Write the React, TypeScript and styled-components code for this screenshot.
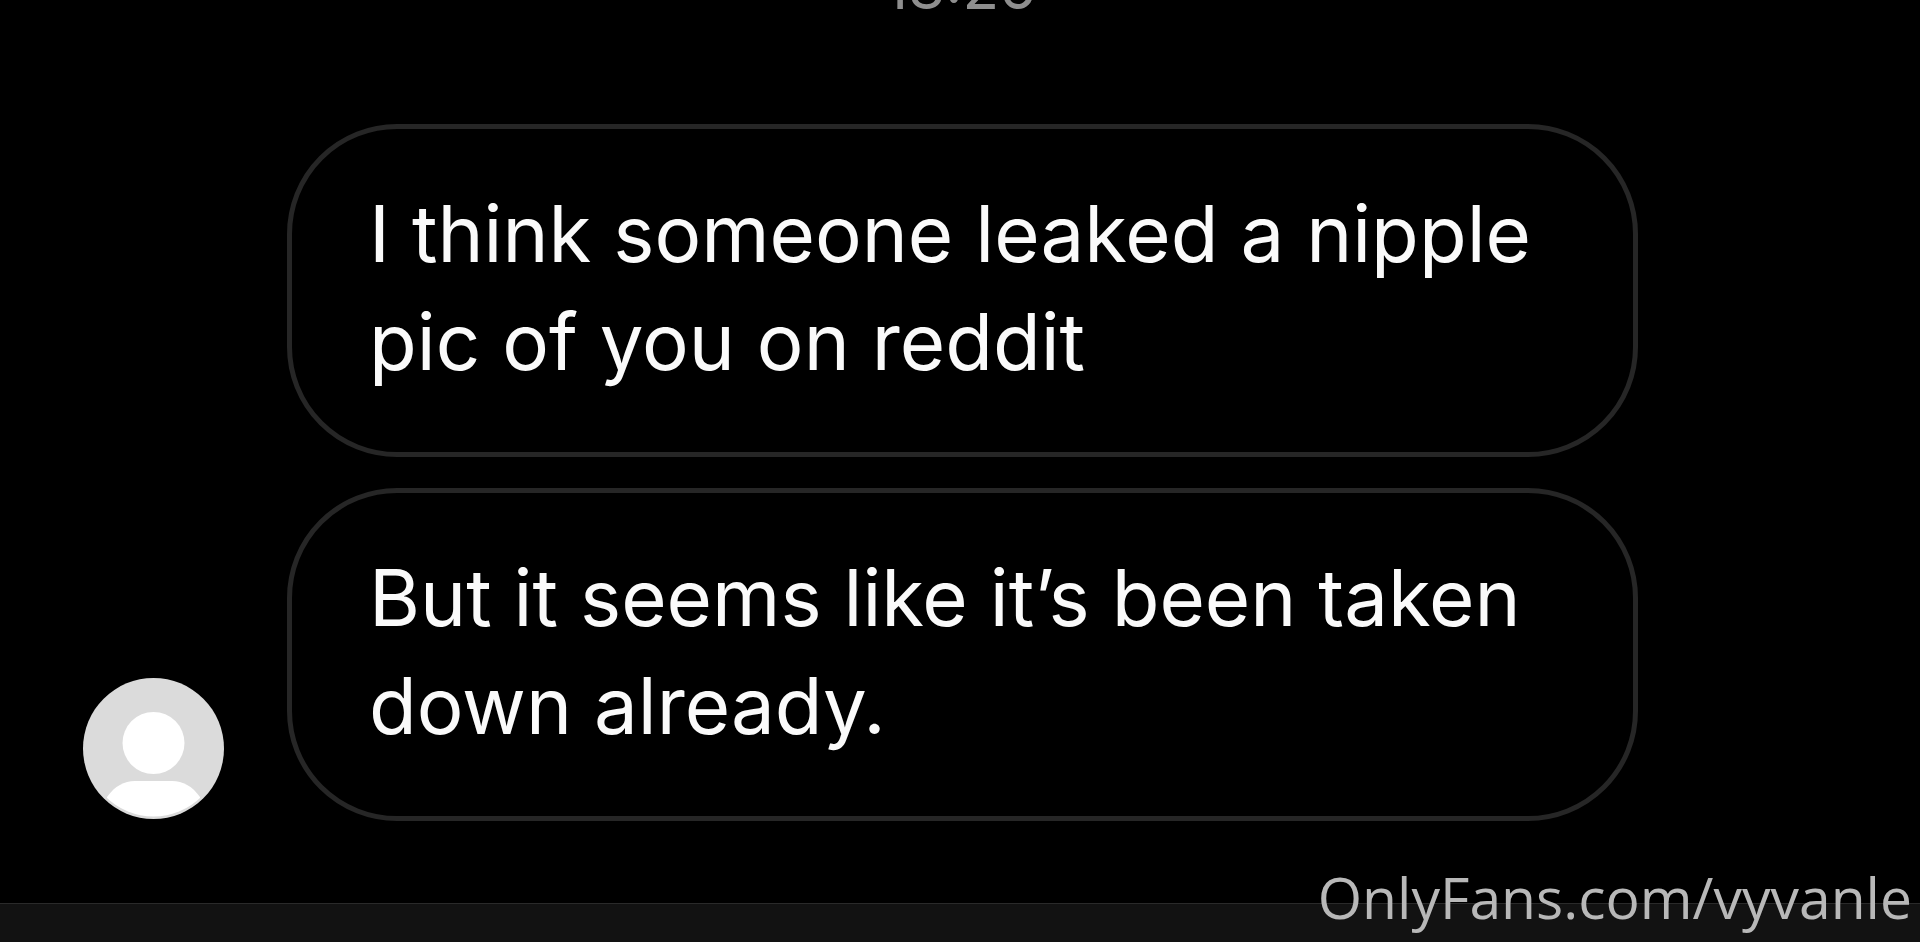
import React from "react";
import styled, { createGlobalStyle } from "styled-components";

const GlobalStyle = createGlobalStyle`
  * {
    box-sizing: border-box;
  }
  body {
    margin: 0;
    background: #000;
    font-family: Inter, "Liberation Sans", sans-serif;
  }
`;

const Screen = styled.main`
  position: relative;
  display: flex;
  flex-direction: column;
  height: 100vh;
  min-height: 720px;
  overflow: hidden;
  background: #000;
`;

const Timestamp = styled.time`
  flex: none;
  margin-top: -53px;
  text-align: center;
  font-size: 60px;
  line-height: 80px;
  color: #8e8e8e;
`;

const Thread = styled.section`
  flex: 1;
  display: flex;
  align-items: flex-end;
  gap: 63px;
  padding: 0 282px 82px 83px;
`;

const Avatar = styled.svg`
  flex: none;
  width: 141px;
  height: 141px;
  margin-bottom: 2px;
`;

const Messages = styled.div`
  flex: 1;
  display: flex;
  flex-direction: column;
  gap: 31px;
`;

const Bubble = styled.p`
  margin: 0;
  padding: 51px 72px 56px 77px;
  border: 5px solid #262626;
  border-radius: 110px;
  font-size: 78px;
  line-height: 108px;
  color: #fafafa;
`;

const Composer = styled.footer`
  flex: none;
  height: 39px;
  border-top: 1px solid #2a2a2a;
  background: #121212;
`;

const Watermark = styled.a`
  position: absolute;
  right: 8px;
  bottom: 5px;
  font-family: "Open Sans", "Noto Sans", sans-serif;
  font-size: 57px;
  line-height: 80px;
  color: #b8b8b8;
  text-decoration: none;
`;

const messages = [
  ["I think someone leaked a nipple", "pic of you on reddit"],
  ["But it seems like it’s been taken", "down already."],
];

export default function App() {
  return (
    <>
      <GlobalStyle />
      <Screen>
        <Timestamp>18:26</Timestamp>
        <Thread>
          <Avatar viewBox="0 0 141 141" role="img" aria-label="Profile picture">
            <defs>
              <clipPath id="face">
                <circle cx="70.5" cy="70.5" r="68" />
              </clipPath>
            </defs>
            <circle cx="70.5" cy="70.5" r="70.5" fill="#dbdbdb" />
            <circle cx="70.5" cy="65" r="31" fill="#fff" />
            <path
              clipPath="url(#face)"
              fill="#fff"
              d="M24 119C32 108 41 103 52 103H89C100 103 109 108 117 119V141H24Z"
            />
          </Avatar>
          <Messages>
            {messages.map(([first, second]) => (
              <Bubble key={first}>
                {first}
                <br />
                {second}
              </Bubble>
            ))}
          </Messages>
        </Thread>
        <Composer />
        <Watermark href="#profile">OnlyFans.com/vyvanle</Watermark>
      </Screen>
    </>
  );
}
